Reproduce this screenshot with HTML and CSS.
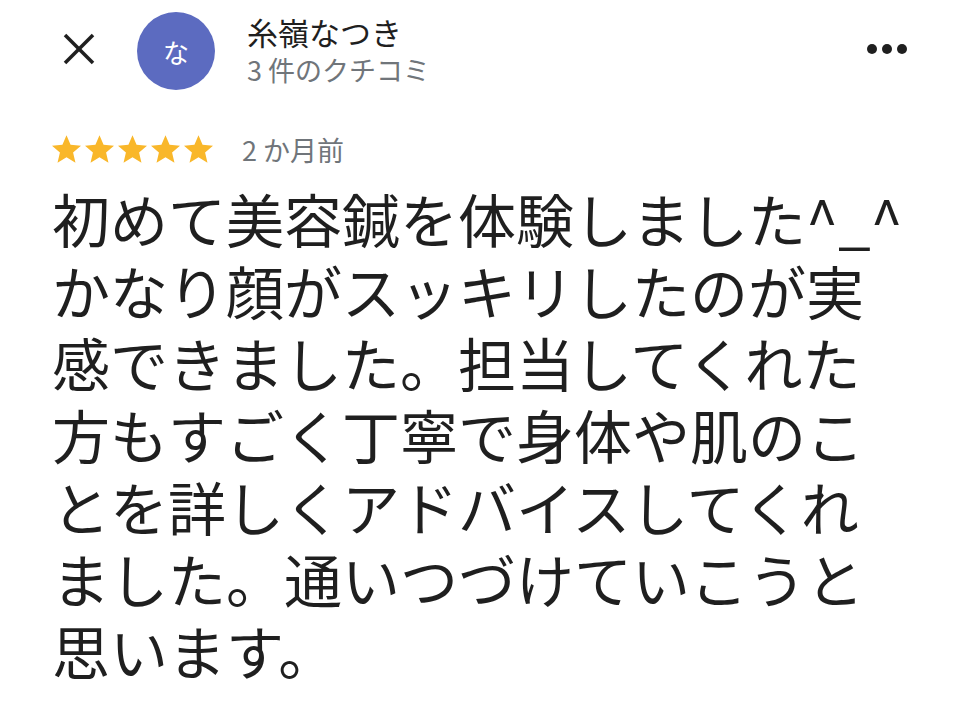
FILE: index.html
```html
<!DOCTYPE html>
<html lang="ja">
<head>
  <meta charset="UTF-8">
  <title>クチコミ</title>
  <meta name="viewport" content="width=device-width, initial-scale=1.0">
  <link rel="stylesheet" href="styles.css">
</head>
<body>

  <div class="review">
    <!-- header: close, avatar, author, menu -->
    <div class="review-header">
      <button class="icon-button close-button" aria-label="閉じる">
        <svg width="34" height="34" viewBox="0 0 34 34">
          <line x1="3" y1="3" x2="31" y2="31" stroke="#1f1f1f" stroke-width="3.6"/>
          <line x1="31" y1="3" x2="3" y2="31" stroke="#1f1f1f" stroke-width="3.6"/>
        </svg>
      </button>
      <div class="avatar">な</div>
      <div class="author">
        <div class="author-name">糸嶺なつき</div>
        <div class="author-meta">3 件のクチコミ</div>
      </div>
      <button class="icon-button more-button" aria-label="その他">
        <span class="dot"></span><span class="dot"></span><span class="dot"></span>
      </button>
    </div>

    <div class="review-body">
      <div class="rating">
        <div class="stars">
          <svg class="star" viewBox="2 2 20 19"><path d="M12 17.27L18.18 21l-1.64-7.03L22 9.24l-7.19-.61L12 2 9.19 8.63 2 9.24l5.46 4.73L5.82 21z"/></svg>
          <svg class="star" viewBox="2 2 20 19"><path d="M12 17.27L18.18 21l-1.64-7.03L22 9.24l-7.19-.61L12 2 9.19 8.63 2 9.24l5.46 4.73L5.82 21z"/></svg>
          <svg class="star" viewBox="2 2 20 19"><path d="M12 17.27L18.18 21l-1.64-7.03L22 9.24l-7.19-.61L12 2 9.19 8.63 2 9.24l5.46 4.73L5.82 21z"/></svg>
          <svg class="star" viewBox="2 2 20 19"><path d="M12 17.27L18.18 21l-1.64-7.03L22 9.24l-7.19-.61L12 2 9.19 8.63 2 9.24l5.46 4.73L5.82 21z"/></svg>
          <svg class="star" viewBox="2 2 20 19"><path d="M12 17.27L18.18 21l-1.64-7.03L22 9.24l-7.19-.61L12 2 9.19 8.63 2 9.24l5.46 4.73L5.82 21z"/></svg>
        </div>
        <span class="review-date">2 か月前</span>
      </div>

      <p class="review-text">初めて美容鍼を体験しました^_^かなり顔がスッキリしたのが実感できました。担当してくれた方もすごく丁寧で身体や肌のことを詳しくアドバイスしてくれました。通いつづけていこうと思います。</p>
    </div>
  </div>

</body>
</html>
```

FILE: styles.css
```css
body {
  margin: 0;
  padding: 0;
  background-color: #ffffff;
  font-family: "Noto Sans CJK JP", "Noto Sans", Roboto, sans-serif;
  color: #1f1f1f;
}
.review {
  width: 966px;
}
.review-header {
  display: flex;
  align-items: center;
  height: 102px;
  padding: 0 59px 0 62px;
  box-sizing: border-box;
}
.icon-button {
  background: none;
  border: none;
  padding: 0;
  margin: 0;
  cursor: pointer;
}
.close-button {
  width: 34px;
  height: 34px;
  margin-top: -4px;
}
.close-button svg {
  display: block;
}
.avatar {
  width: 78px;
  height: 78px;
  margin-left: 41px;
  border-radius: 50%;
  background-color: #5c6bc0;
  color: #ffffff;
  font-size: 26px;
  display: flex;
  align-items: center;
  justify-content: center;
}
.author {
  margin-left: 32px;
  display: flex;
  flex-direction: column;
  gap: 2px;
}
.author-name {
  font-size: 31px;
  line-height: 36px;
  color: #1f1f1f;
}
.author-meta {
  font-size: 27px;
  line-height: 36px;
  color: #70757a;
}
.more-button {
  margin-left: auto;
  display: flex;
  gap: 5px;
  margin-top: -4px;
}
.dot {
  width: 10px;
  height: 10px;
  border-radius: 50%;
  background-color: #1f1f1f;
}
.review-body {
  padding: 0 52px;
}
.rating {
  display: flex;
  align-items: center;
  height: 30px;
  margin-top: 32px;
}
.stars {
  display: flex;
  gap: 4px;
}
.star {
  width: 29px;
  height: 28px;
  fill: #f9b72a;
}
.review-date {
  margin-left: 29px;
  font-size: 27px;
  color: #70757a;
}
.review-text {
  margin: 18px 0 0;
  width: 860px;
  font-size: 58px;
  line-height: 72px;
  color: #1f1f1f;
}
```
